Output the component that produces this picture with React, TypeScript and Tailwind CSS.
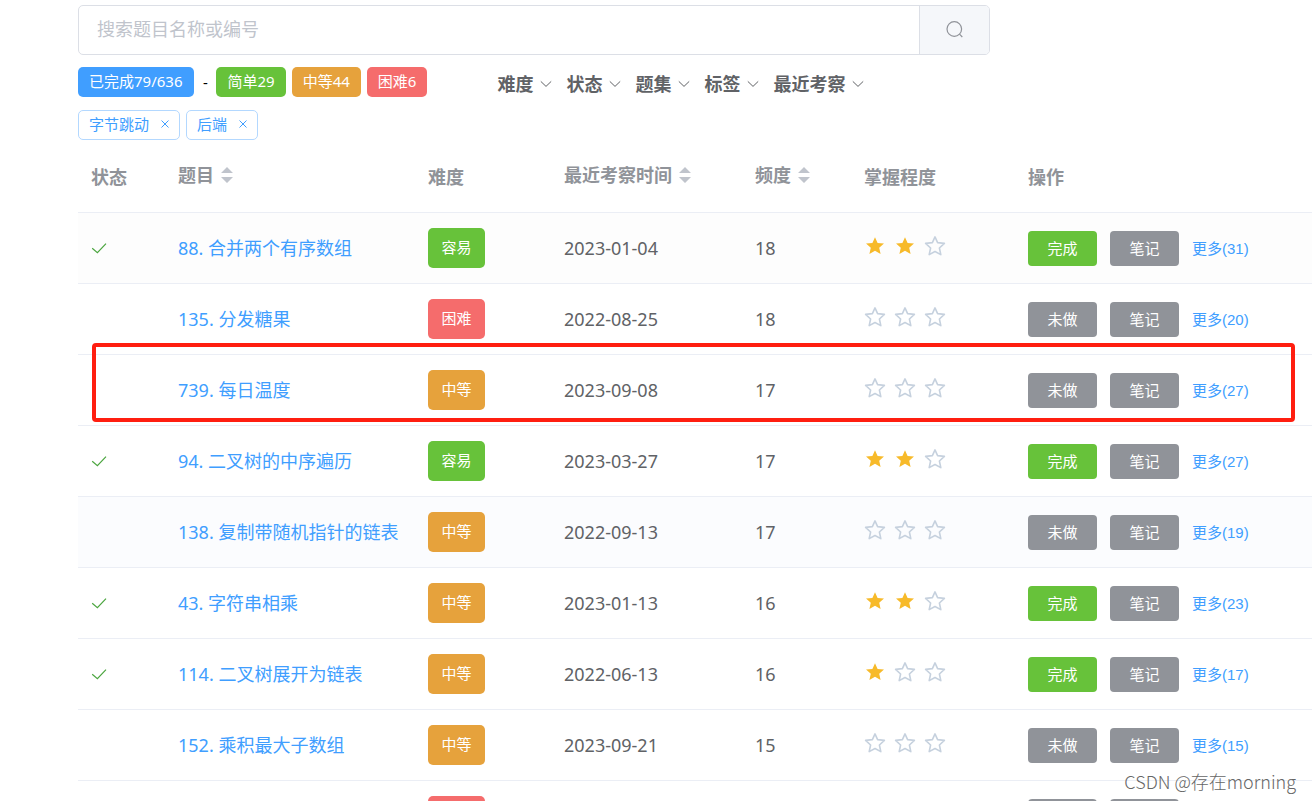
import { useState } from "react";

type Level = "容易" | "中等" | "困难";

interface Problem {
  id: number;
  title: string;
  level: Level;
  date: string;
  freq: number;
  stars: number;
  done: boolean;
  more: number;
  marked?: boolean;
  tint?: string;
}

const problems: Problem[] = [
  { id: 88, title: "合并两个有序数组", level: "容易", date: "2023-01-04", freq: 18, stars: 2, done: true, more: 31, tint: "bg-[#fdfdfd]" },
  { id: 135, title: "分发糖果", level: "困难", date: "2022-08-25", freq: 18, stars: 0, done: false, more: 20 },
  { id: 739, title: "每日温度", level: "中等", date: "2023-09-08", freq: 17, stars: 0, done: false, more: 27, marked: true },
  { id: 94, title: "二叉树的中序遍历", level: "容易", date: "2023-03-27", freq: 17, stars: 2, done: true, more: 27 },
  { id: 138, title: "复制带随机指针的链表", level: "中等", date: "2022-09-13", freq: 17, stars: 0, done: false, more: 19, tint: "bg-[#fbfcfe]" },
  { id: 43, title: "字符串相乘", level: "中等", date: "2023-01-13", freq: 16, stars: 2, done: true, more: 23 },
  { id: 114, title: "二叉树展开为链表", level: "中等", date: "2022-06-13", freq: 16, stars: 1, done: true, more: 17 },
  { id: 152, title: "乘积最大子数组", level: "中等", date: "2023-09-21", freq: 15, stars: 0, done: false, more: 15 },
];

const levelColor: Record<Level, string> = {
  容易: "bg-[#67c23a]",
  中等: "bg-[#e6a23c]",
  困难: "bg-[#f56c6c]",
};

const filters = ["难度", "状态", "题集", "标签", "最近考察"];

function Chevron() {
  return (
    <svg className="h-3 w-3" viewBox="0 0 12 12" fill="none" stroke="#606266" strokeWidth="1" aria-hidden="true">
      <path d="M0.8 3.4 6 8.4l5.2-5" />
    </svg>
  );
}

function Check() {
  return (
    <svg className="h-4 w-4" viewBox="0 0 16 16" fill="none" stroke="#4ba53f" strokeWidth="1.2" role="img" aria-label="已完成">
      <path d="M1.2 8.3 6.4 12.6 15 3.6" />
    </svg>
  );
}

function SortCaret() {
  return (
    <svg className="h-4 w-3" viewBox="0 0 12 16" fill="#c0c4cc" aria-hidden="true">
      <path d="M0 6 6 0l6 6zM0 10h12l-6 6z" />
    </svg>
  );
}

function Star({ filled }: { filled: boolean }) {
  return filled ? (
    <svg className="h-[22px] w-[22px]" viewBox="0 0 22 22" fill="#f7ba2a" aria-hidden="true">
      <path d="M11 2.2 13.6 8l6.400.600-4.800 4.200 1.400 6.300L11 15.800l-5.600 3.300 1.400-6.300L2 8.600 8.400 8z" />
    </svg>
  ) : (
    <svg className="h-[22px] w-[22px]" viewBox="0 0 22 22" fill="none" stroke="#c6d1de" strokeWidth="1.600" strokeLinejoin="round" aria-hidden="true">
      <path d="M11 1.900 13.600 7.600l6.800.800-5 4.600 1.400 6.600L11 16.500l-5.800 3.100 1.400-6.600-5-4.600 6.800-.800z" />
    </svg>
  );
}

function HeadCell({ label, sortable }: { label: string; sortable?: boolean }) {
  return (
    <th scope="col" className="pl-[13px] text-left align-top font-bold">
      {sortable ? (
        <button type="button" className="flex items-center gap-[7px] pt-[17px] leading-6 font-bold">
          {label}
          <SortCaret />
        </button>
      ) : (
        <span className="block pt-[19px] leading-6">{label}</span>
      )}
    </th>
  );
}

function LevelTag({ level }: { level: Level }) {
  return (
    <span className={`flex h-10 w-[57px] items-center justify-center rounded-[5px] text-[15px] text-white ${levelColor[level]}`}>
      {level}
    </span>
  );
}

function ActionButton({ label, color }: { label: string; color: string }) {
  return (
    <button type="button" className={`h-[35px] w-[69px] rounded-[4px] text-[15px] text-white ${color}`}>
      {label}
    </button>
  );
}

function ProblemRow({ p }: { p: Problem }) {
  return (
    <tr className={`relative h-[71px] border-b border-[#ebeef5] ${p.tint ?? ""}`}>
      <td className="pl-[13px]">
        {p.done && <Check />}
        {p.marked && (
          <span className="pointer-events-none absolute -top-[11px] right-[17px] bottom-0.5 left-3.5 z-10 rounded-[4px] border-4 border-[#ff1e10]" />
        )}
      </td>
      <td className="pt-0.5 pl-[13px] whitespace-nowrap">
        <a href="#" className="text-[#409eff]">{`${p.id}. ${p.title}`}</a>
      </td>
      <td className="pl-[13px]">
        <LevelTag level={p.level} />
      </td>
      <td className="pt-0.5 pl-[13px]">{p.date}</td>
      <td className="pt-0.5 pl-[13px]">{p.freq}</td>
      <td className="pl-[13px]">
        <div className="flex gap-2 pb-[3px]" role="img" aria-label={`${p.stars}/3`}>
          {[1, 2, 3].map((n) => (
            <Star key={n} filled={n <= p.stars} />
          ))}
        </div>
      </td>
      <td className="pt-0.5 pl-[13px]">
        <div className="flex items-center gap-[13px] whitespace-nowrap">
          <ActionButton label={p.done ? "完成" : "未做"} color={p.done ? "bg-[#67c23a]" : "bg-[#909399]"} />
          <ActionButton label="笔记" color="bg-[#909399]" />
          <a href="#" className="pt-0.5 font-['Liberation_Sans','Noto_Sans_CJK_SC',sans-serif] text-[15px] text-[#409eff]">
            {`更多(${p.more})`}
          </a>
        </div>
      </td>
    </tr>
  );
}

export default function App() {
  const [query, setQuery] = useState("");
  const [tags, setTags] = useState(["字节跳动", "后端"]);

  return (
    <div className="relative h-screen overflow-hidden bg-white pt-[5px] pl-[78px] font-['Noto_Sans','Noto_Sans_CJK_SC',sans-serif] text-[18px] text-[#606266]">
      <form className="flex h-[50px] w-full max-w-[912px] overflow-hidden rounded-[5px] border border-[#dcdfe6]" onSubmit={(e) => e.preventDefault()}>
        <input
          aria-label="搜索题目"
          className="min-w-0 flex-1 px-[18px] pb-0.5 outline-none placeholder:text-[#c0c4cc]"
          placeholder="搜索题目名称或编号"
          value={query}
          onChange={(e) => setQuery(e.target.value)}
        />
        <button type="submit" aria-label="搜索" className="flex w-[70px] items-center justify-center border-l border-[#dcdfe6] bg-[#f5f7fa]">
          <svg className="h-[18px] w-[18px]" viewBox="0 0 18 18" fill="none" stroke="#909399" strokeWidth="1.2" aria-hidden="true">
            <circle cx="8.300" cy="8" r="7.300" />
            <path d="m13.500 13.200 2.800 2.800" />
          </svg>
        </button>
      </form>

      <div className="flex items-center gap-[70px] pt-3">
        <div className="flex items-center gap-1.5 text-[15px] leading-7 text-white">
          <span className="rounded-[5px] bg-[#409eff] pr-3 pb-0.5 pl-[11px]">已完成79/636</span>
          <span className="w-2.5 text-center text-black">-</span>
          <span className="rounded-[5px] bg-[#67c23a] px-[11px] pb-0.5">简单29</span>
          <span className="rounded-[5px] bg-[#e6a23c] px-[11px] pb-0.5">中等44</span>
          <span className="rounded-[5px] bg-[#f56c6c] px-[11px] pb-0.5">困难6</span>
        </div>
        <div className="flex items-center gap-3.5 pt-1">
          {filters.map((f) => (
            <button key={f} type="button" className="flex items-center gap-[7px] leading-[26px] font-bold">
              {f}
              <Chevron />
            </button>
          ))}
        </div>
      </div>

      <div className="flex gap-1.5 pt-[13px]">
        {tags.map((t) => (
          <span key={t} className="flex h-[30px] items-center gap-3 rounded-[5px] border border-[#b3d8ff] px-2.5 pb-0.5 text-[15px] text-[#409eff]">
            {t}
            <button type="button" aria-label={`移除${t}`} onClick={() => setTags(tags.filter((x) => x !== t))}>
              <svg className="h-2 w-2" viewBox="0 0 8 8" fill="none" stroke="#409eff" strokeWidth="1" aria-hidden="true">
                <path d="m.5.5 7 7m0-7-7 7" />
              </svg>
            </button>
          </span>
        ))}
      </div>

      <table className="mt-1.5 w-full min-w-[1234px] table-fixed border-collapse">
        <colgroup>
          <col className="w-[87px]" />
          <col className="w-[250px]" />
          <col className="w-[136px]" />
          <col className="w-[191px]" />
          <col className="w-[109px]" />
          <col className="w-[164px]" />
          <col />
        </colgroup>
        <thead>
          <tr className="h-[66px] border-b border-[#ebeef5] text-[#909399]">
            <HeadCell label="状态" />
            <HeadCell label="题目" sortable />
            <HeadCell label="难度" />
            <HeadCell label="最近考察时间" sortable />
            <HeadCell label="频度" sortable />
            <HeadCell label="掌握程度" />
            <HeadCell label="操作" />
          </tr>
        </thead>
        <tbody>
          {problems.map((p) => (
            <ProblemRow key={p.id} p={p} />
          ))}
          <tr className="h-[71px]">
            <td colSpan={2} />
            <td className="pl-[13px]">
              <span className="block h-10 w-[57px] rounded-[5px] bg-[#f56c6c]" />
            </td>
            <td colSpan={3} />
            <td className="pt-0.5 pl-[13px]">
              <div className="flex gap-[13px]">
                <span className="h-[35px] w-[69px] rounded-[4px] bg-[#909399]" />
                <span className="h-[35px] w-[69px] rounded-[4px] bg-[#909399]" />
              </div>
            </td>
          </tr>
        </tbody>
      </table>

      <p className="absolute right-4 bottom-2 font-['Noto_Sans_CJK_SC',sans-serif] text-[18px] leading-6 font-light text-[#666666]">CSDN @存在morning</p>
    </div>
  );
}
